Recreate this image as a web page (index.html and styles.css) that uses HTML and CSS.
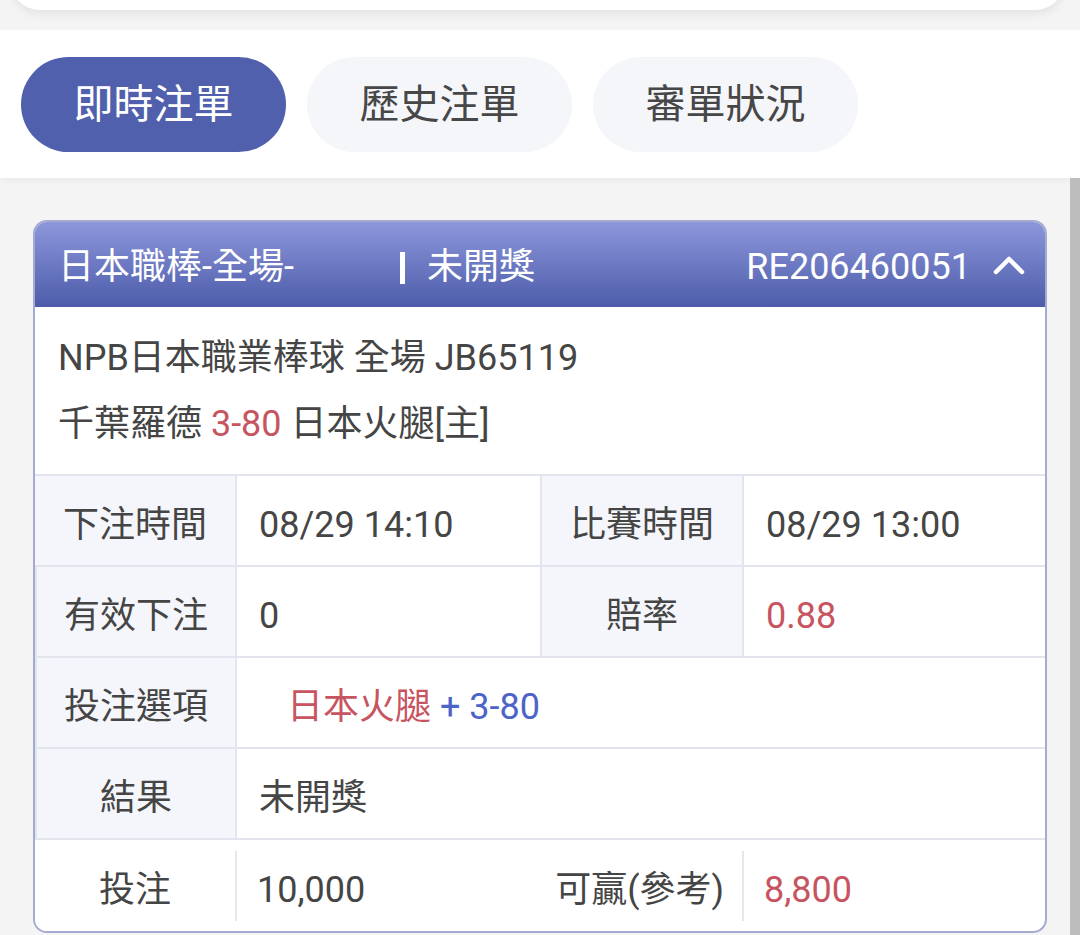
FILE: index.html
```html
<!DOCTYPE html>
<html lang="zh-Hant">
<head>
    <meta charset="UTF-8">
    <meta name="viewport" content="width=device-width, initial-scale=1.0">
    <title>注單</title>
    <link rel="stylesheet" href="styles.css">
</head>
<body>
    <div class="top-card"></div>

    <div class="tabs">
        <a href="#" class="tab active">即時注單</a>
        <a href="#" class="tab">歷史注單</a>
        <a href="#" class="tab">審單狀況</a>
    </div>

    <div class="content">
        <div class="list">
            <div class="bet-card">
                <div class="bet-head">
                    <span class="bet-league">日本職棒-全場-</span>
                    <span class="bet-status">未開獎</span>
                    <span class="bet-no">RE206460051</span>
                    <svg class="chevron" width="32" height="20" viewBox="0 0 32 20">
                        <polyline points="3,17 16,4 29,17" fill="none" stroke="#fff" stroke-width="4.5" stroke-linecap="round" stroke-linejoin="round"/>
                    </svg>
                </div>

                <div class="bet-info">
                    <p>NPB日本職業棒球 全場 JB65119</p>
                    <p>千葉羅德 <span class="red">3-80</span> 日本火腿[主]</p>
                </div>

                <div class="bet-table">
                    <div class="cell label">下注時間</div>
                    <div class="cell value">08/29 14:10</div>
                    <div class="cell label">比賽時間</div>
                    <div class="cell value">08/29 13:00</div>

                    <div class="cell label">有效下注</div>
                    <div class="cell value">0</div>
                    <div class="cell label">賠率</div>
                    <div class="cell value red">0.88</div>

                    <div class="cell label">投注選項</div>
                    <div class="cell value wide pick"><span><span class="red">日本火腿</span> <span class="blue">+ 3-80</span></span></div>

                    <div class="cell label">結果</div>
                    <div class="cell value wide">未開獎</div>

                    <div class="cell label last">投注</div>
                    <div class="cell value last split">10,000</div>
                    <div class="cell label last right">可贏(參考)</div>
                    <div class="cell value last split red">8,800</div>
                </div>
            </div>
        </div>
        <div class="scrollbar"></div>
    </div>
</body>
</html>
```

FILE: styles.css
```css
body {
    margin: 0;
    background-color: #f4f4f4;
    font-family: Roboto, "Noto Sans CJK TC", sans-serif;
    line-height: 1.2;
    color: #454545;
    overflow: hidden;
}
p {
    margin: 0;
}

/* bottom edge of the card above */
.top-card {
    height: 40px;
    margin: -30px 15px 20px 10px;
    background: white;
    border-radius: 0 0 30px 30px;
    box-shadow: 0 4px 10px rgba(0, 0, 0, 0.07);
}

.tabs {
    display: flex;
    gap: 21px;
    padding: 27px 21px 26px;
    background: white;
    box-shadow: 0 3px 6px rgba(0, 0, 0, 0.04);
}
.tab {
    width: 265px;
    height: 95px;
    border-radius: 48px;
    display: flex;
    align-items: center;
    justify-content: center;
    background-color: #f5f6fa;
    color: #474747;
    font-size: 40px;
    text-decoration: none;
}
.tab.active {
    background-color: #5060ad;
    color: white;
}

.content {
    display: flex;
}
.list {
    flex: 1;
    padding: 42px 23px 0 33px;
}
.scrollbar {
    width: 10px;
    height: 760px;
    background-color: #bdbdbd;
}

.bet-card {
    background: white;
    border: 2px solid #a5abd0;
    border-radius: 14px;
    overflow: hidden;
    font-size: 36px;
}
.bet-head {
    height: 85px;
    box-sizing: border-box;
    display: flex;
    align-items: center;
    padding: 6px 20px 0 23px;
    background: linear-gradient(#8c97db, #4d5caa);
    color: white;
}
.bet-league {
    width: 342px;
}
.bet-status {
    display: flex;
    align-items: center;
}
.bet-status::before {
    content: "";
    width: 5px;
    height: 32px;
    margin-right: 22px;
    background: white;
}
.bet-no {
    margin-left: auto;
    margin-right: 22px;
}
.chevron {
    margin-top: -6px;
}

.bet-info {
    padding: 18px 23px 17px;
    line-height: 66px;
    border-bottom: 2px solid #e3e5ee;
}

.bet-table {
    display: grid;
    grid-template-columns: 200px 305px 202px 1fr;
    grid-auto-rows: 91px;
}
.cell {
    display: flex;
    align-items: center;
    box-sizing: border-box;
    padding-top: 11px;
    border-bottom: 2px solid #e3e5ee;
}
.cell + .cell {
    border-left: 2px solid #e3e5ee;
}
.label {
    justify-content: center;
    background-color: #f5f6fb;
}
.value {
    padding-left: 22px;
}
.wide {
    grid-column: span 3;
}
.pick {
    padding-left: 50px;
}

/* last row: no fill, short divider lines before the values only */
.cell.last {
    border-bottom: none;
    border-left: none;
    background: white;
}
.cell.last.split {
    background: linear-gradient(#e6e7ee, #e6e7ee) left center / 2px 70px no-repeat;
}
.label.right {
    justify-content: flex-end;
    padding-right: 18px;
}

.red {
    color: #c75561;
}
.blue {
    color: #4c63c8;
}
```
